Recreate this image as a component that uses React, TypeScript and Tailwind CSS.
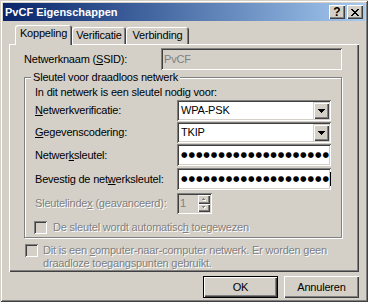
import React from "react";

const U = ({ children }: { children: React.ReactNode }) => (
  <span className="underline decoration-1 underline-offset-[1px]">{children}</span>
);

const Arrow = () => (
  <svg width="7" height="4" viewBox="0 0 7 4" shapeRendering="crispEdges">
    <path d="M0 0h7v1H0zM1 1h5v1H1zM2 2h3v1H2zM3 3h1v1H3z" fill="#000000" />
  </svg>
);

function Combo({ value }: { value: string }) {
  return (
    <div className="w-[154px] h-[21px] bg-white p-[2px] flex shadow-[inset_1px_1px_0_#808080,inset_-1px_-1px_0_#ffffff,inset_2px_2px_0_#404040,inset_-2px_-2px_0_#d4d0c8]">
      <div className="flex-1 flex items-center pl-[2px]">{value}</div>
      <div className="w-[16px] h-[17px] bg-[#d4d0c8] flex items-center justify-center shadow-[inset_1px_1px_0_#d4d0c8,inset_2px_2px_0_#ffffff,inset_-1px_-1px_0_#404040,inset_-2px_-2px_0_#808080]">
        <Arrow />
      </div>
    </div>
  );
}

function Password({ caret }: { caret?: boolean }) {
  return (
    <div className="w-[154px] h-[22px] bg-white flex items-center pl-[4px] overflow-hidden shadow-[inset_1px_1px_0_#808080,inset_-1px_-1px_0_#ffffff,inset_2px_2px_0_#404040,inset_-2px_-2px_0_#d4d0c8]">
      <span className="font-['DejaVu_Sans',sans-serif] text-[7.5px] leading-none tracking-[0.9px] whitespace-nowrap">
        {"●".repeat(20)}
      </span>
      {caret && <span className="w-px h-[14px] bg-black shrink-0" />}
    </div>
  );
}

function Checkbox() {
  return (
    <div className="w-[13px] h-[13px] shrink-0 bg-[#d4d0c8] shadow-[inset_1px_1px_0_#808080,inset_-1px_-1px_0_#ffffff,inset_2px_2px_0_#404040,inset_-2px_-2px_0_#d4d0c8]" />
  );
}

const SpinTri = ({ up }: { up?: boolean }) => (
  <svg width="6" height="4" viewBox="0 0 6 4" shapeRendering="crispEdges">
    {up ? (
      <>
        <path d="M3 1h1v1H3zM2 2h3v1H2z" fill="#ffffff" />
        <path d="M2 0h1v1H2zM1 1h3v1H1z" fill="#808080" />
      </>
    ) : (
      <>
        <path d="M2 1h3v1H2zM3 2h1v1H3z" fill="#ffffff" />
        <path d="M1 0h3v1H1zM2 1h1v1H2z" fill="#808080" />
      </>
    )}
  </svg>
);

export default function App() {
  const dis = "text-[#808080] [text-shadow:1px_1px_0_#ffffff]";
  return (
    <div className="w-[368px] h-[302px] bg-[#d4d0c8] p-[3px] flex flex-col shadow-[inset_1px_1px_0_#d4d0c8,inset_-1px_-1px_0_#404040,inset_2px_2px_0_#ffffff,inset_-2px_-2px_0_#808080] font-['Liberation_Sans',Arial,sans-serif] text-[11px] leading-[13px] tracking-[-0.2px] text-black select-none overflow-hidden">
      {/* Title bar */}
      <div className="h-[18px] shrink-0 flex items-center bg-linear-to-r from-[#0a246a] to-[#a6caf0] px-[2px]">
        <span className="flex-1 font-bold text-white tracking-normal">PvCF Eigenschappen</span>
        <div className="w-[16px] h-[14px] bg-[#d4d0c8] flex items-center justify-center font-bold text-[12px] leading-none tracking-normal shadow-[inset_1px_1px_0_#ffffff,inset_-1px_-1px_0_#404040,inset_-2px_-2px_0_#808080]">
          ?
        </div>
        <div className="ml-[2px] w-[16px] h-[14px] bg-[#d4d0c8] flex items-center justify-center shadow-[inset_1px_1px_0_#ffffff,inset_-1px_-1px_0_#404040,inset_-2px_-2px_0_#808080]">
          <svg width="8" height="7" viewBox="0 0 8 7" shapeRendering="crispEdges">
            <path
              d="M0 0h2v1H0zM6 0h2v1H6zM1 1h2v1H1zM5 1h2v1H5zM2 2h4v1H2zM3 3h2v1H3zM2 4h4v1H2zM1 5h2v1H1zM5 5h2v1H5zM0 6h2v1H0zM6 6h2v1H6z"
              fill="#000000"
            />
          </svg>
        </div>
      </div>

      {/* Client */}
      <div className="flex-1 flex flex-col px-[6px] pt-[4px]">
        {/* Tabs */}
        <div className="flex items-end h-[19px] pl-[6px]">
          <div className="relative z-10 w-[57px] h-[20px] -mb-px rounded-t-[3px] bg-[#d4d0c8] flex justify-center pt-[2px] shadow-[inset_1px_1px_0_#ffffff,inset_-1px_0_0_#404040,inset_-2px_0_0_#808080]">
            Koppeling
          </div>
          <div className="w-[54px] h-[17px] rounded-t-[3px] flex justify-center pt-[2px] shadow-[inset_1px_1px_0_#ffffff,inset_-1px_0_0_#404040,inset_-2px_0_0_#808080]">
            Verificatie
          </div>
          <div className="w-[63px] h-[17px] rounded-t-[3px] flex justify-center pt-[2px] shadow-[inset_1px_1px_0_#ffffff,inset_-1px_0_0_#404040,inset_-2px_0_0_#808080]">
            Verbinding
          </div>
        </div>

        {/* Panel */}
        <div className="h-[228px] bg-[#d4d0c8] flex flex-col pl-[15px] pt-[4px] shadow-[inset_1px_1px_0_#ffffff,inset_-1px_-1px_0_#404040,inset_-2px_-2px_0_#808080]">
          <div className="flex items-center h-[22px]">
            <div className="w-[137px]">
              Netwerknaam (<U>S</U>SID):
            </div>
            <div className="w-[181px] h-[22px] bg-[#d4d0c8] text-[#808080] flex items-center pl-[3px] shadow-[inset_1px_1px_0_#808080,inset_-1px_-1px_0_#ffffff,inset_2px_2px_0_#404040,inset_-2px_-2px_0_#d4d0c8]">
              PvCF
            </div>
          </div>

          {/* Group box */}
          <div className="relative mt-[7px] w-[318px] h-[161px] border border-[#808080] shadow-[inset_1px_1px_0_#ffffff,1px_1px_0_#ffffff] pl-[10px] pt-[8px]">
            <span className="absolute -top-[7px] left-[6px] px-[2px] bg-[#d4d0c8]">
              Sleutel voor draadloos netwerk
            </span>
            <div>In dit netwerk is een sleutel nodig voor:</div>
            <div className="flex items-center mt-[1px]">
              <div className="w-[142px]">
                <U>N</U>etwerkverificatie:
              </div>
              <Combo value="WPA-PSK" />
            </div>
            <div className="flex items-center mt-[1px]">
              <div className="w-[142px]">
                <U>G</U>egevenscodering:
              </div>
              <Combo value="TKIP" />
            </div>
            <div className="flex items-center mt-[1px]">
              <div className="w-[142px]">
                Netwer<U>k</U>sleutel:
              </div>
              <Password />
            </div>
            <div className="flex items-center mt-[2px]">
              <div className="w-[142px]">
                Bevestig de net<U>w</U>erksleutel:
              </div>
              <Password caret />
            </div>
            <div className="flex items-center mt-[3px]">
              <div className={`w-[142px] ${dis}`}>
                Sleutelinde<U>x</U> (geavanceerd):
              </div>
              <div className="w-[35px] h-[21px] bg-[#d4d0c8] flex p-[2px] shadow-[inset_1px_1px_0_#808080,inset_-1px_-1px_0_#ffffff,inset_2px_2px_0_#404040,inset_-2px_-2px_0_#d4d0c8]">
                <div className="flex-1 flex items-center pl-[1px] text-[#808080]">1</div>
                <div className="w-[12px] flex flex-col">
                  <div className="h-[9px] flex items-center justify-center shadow-[inset_1px_1px_0_#ffffff,inset_-1px_-1px_0_#404040,inset_-2px_-2px_0_#808080]">
                    <SpinTri up />
                  </div>
                  <div className="h-[8px] flex items-center justify-center shadow-[inset_1px_1px_0_#ffffff,inset_-1px_-1px_0_#404040,inset_-2px_-2px_0_#808080]">
                    <SpinTri />
                  </div>
                </div>
              </div>
            </div>
            <div className="flex items-center mt-[7px] -ml-px">
              <Checkbox />
              <span className={`ml-[6px] ${dis}`}>
                De sleutel wordt automatisc<U>h</U> toegewezen
              </span>
            </div>
          </div>

          <div className="flex items-start mt-[6px] ml-px">
            <Checkbox />
            <span className={`ml-[5px] ${dis}`}>
              Dit is een <U>c</U>omputer-naar-computer netwerk. Er worden geen
              <br />
              draadloze toegangspunten gebruikt.
            </span>
          </div>
        </div>

        {/* Buttons */}
        <div className="flex justify-end gap-[6px] mt-[4px]">
          <div className="w-[75px] h-[22px] border border-black flex items-center justify-center shadow-[inset_1px_1px_0_#ffffff,inset_-1px_-1px_0_#404040,inset_-2px_-2px_0_#808080]">
            OK
          </div>
          <div className="w-[75px] h-[22px] flex items-center justify-center shadow-[inset_1px_1px_0_#ffffff,inset_-1px_-1px_0_#404040,inset_-2px_-2px_0_#808080]">
            Annuleren
          </div>
        </div>
      </div>
    </div>
  );
}
